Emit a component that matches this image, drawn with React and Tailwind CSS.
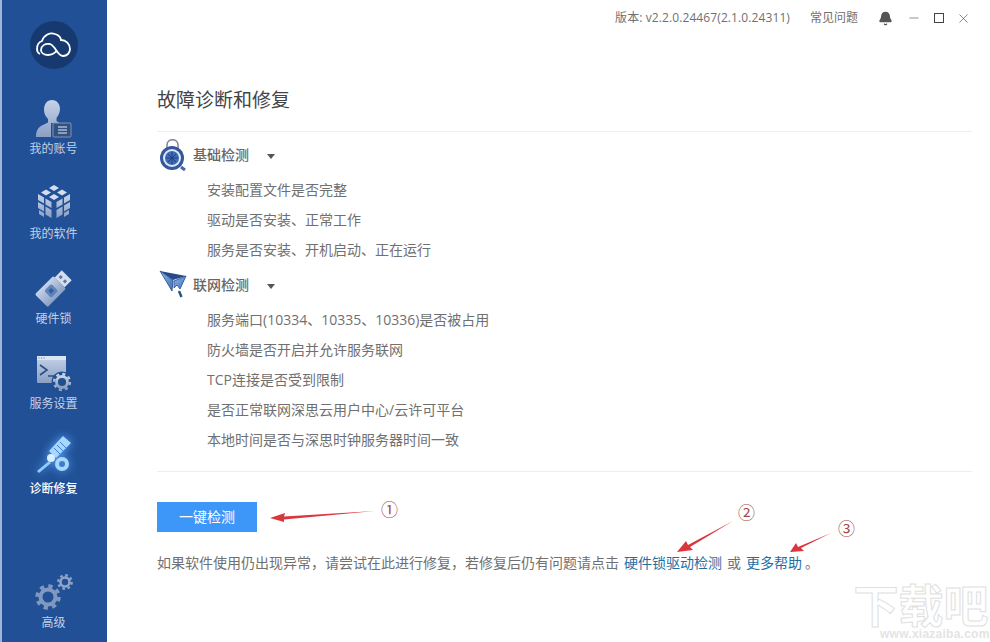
import React from "react";
import { Bell, X, Minus } from "lucide-react";

const cjk = "font-['Open_Sans','Noto_Sans_CJK_SC',sans-serif]";

function Gear({ cx, cy, r, color = "url(#navFill)", sw }) {
  const width = sw || r * 0.42;
  const outer = r + width * 0.85;
  const teeth = 8;
  const c = 2 * Math.PI * outer;
  return (
    <g fill="none">
      <circle cx={cx} cy={cy} r={r} stroke={color} strokeWidth={width} />
      <circle
        cx={cx}
        cy={cy}
        r={outer}
        stroke={color}
        strokeWidth={width * 0.9}
        strokeDasharray={`${c / teeth / 2} ${c / teeth / 2}`}
      />
    </g>
  );
}

function NavDefs() {
  return (
    <svg width="0" height="0" className="absolute">
      <defs>
        <linearGradient id="navFill" x1="0" y1="0" x2="0" y2="1">
          <stop offset="0" stopColor="#c6d3e8" />
          <stop offset="1" stopColor="#8a9fc4" />
        </linearGradient>
        <linearGradient id="planeFill" x1="0" y1="0" x2="1" y2="1">
          <stop offset="0" stopColor="#8db9ea" />
          <stop offset="1" stopColor="#3f70b8" />
        </linearGradient>
      </defs>
    </svg>
  );
}

function UserIcon() {
  return (
    <svg width="40" height="40" viewBox="0 0 40 40">
      <path d="M18 2c5 0 8 4 8 9 0 4-2 7-3.500 9l0 3 3 2H17v14H2c0-6 2-10 7-12l5-2.500 0-3.500c-2-2-4-5-4-9 0-6 3-10 8-10z" fill="url(#navFill)" />
      <rect x="19" y="25" width="18" height="14" rx="1" fill="#33507f" stroke="#7f95bb" strokeWidth="1" />
      <path d="M24 29h9M24 32h9M24 35h9" stroke="#a9bbd6" strokeWidth="1.300" />
    </svg>
  );
}

function CubeIcon() {
  return (
    <svg width="40" height="40" viewBox="0 0 40 40" fill="url(#navFill)">
      <path d="M20 2l5 3-5 3-5-3zM12 6.500l5 3-5 3-5-3zM28 6.500l5 3-5 3-5-3zM20 11l5 3-5 3-5-3z" fill="#d3deee" />
      <path d="M4 11l6 3.500v6L4 17zM11.500 15.500l6 3.500v6l-6-3.500zM4 19l6 3.500v6L4 25zM11.500 23.500l6 3.500v8l-6-3.500zM5 27l5 3v4l-5-3z" />
      <path d="M36 11l-6 3.500v6l6-3.500zM28.500 15.500l-6 3.500v6l6-3.500zM36 19l-6 3.500v6l6-3.500zM28.500 23.500l-6 3.500v8l6-3.500zM35 27l-5 3v4l5-3z" />
    </svg>
  );
}

function UsbIcon() {
  return (
    <svg width="40" height="40" viewBox="0 0 40 40">
      <g transform="rotate(-45 20 20)">
        <rect x="2" y="11" width="26" height="18" rx="1.500" fill="url(#navFill)" />
        <rect x="28" y="13" width="10" height="14" fill="#d5deed" />
        <rect x="31" y="15.500" width="3" height="3" fill="#5a78a8" />
        <rect x="31" y="21.500" width="3" height="3" fill="#5a78a8" />
        <rect x="11" y="15" width="10" height="10" rx="2" fill="#5f83ba" />
        <rect x="14" y="18" width="4" height="4" fill="#2f5fa6" />
      </g>
    </svg>
  );
}

function TerminalIcon() {
  return (
    <svg width="40" height="40" viewBox="0 0 40 40">
      <rect x="3" y="3" width="29" height="27" rx="1" fill="url(#navFill)" />
      <rect x="3" y="3" width="29" height="4" fill="#dbe4f2" />
      <path d="M4.500 5h1M7 5h1M9.500 5h1" stroke="#5b76a5" strokeWidth="1.200" />
      <path d="M6 12l7 5-7 5M14 23h6" stroke="#2d4d85" strokeWidth="1.600" fill="none" />
      <circle cx="28" cy="29" r="10.500" fill="#21508f" />
      <Gear cx={28} cy={29} r={5.500} sw={2.800} />
    </svg>
  );
}

function RepairIcon() {
  return (
    <svg width="44" height="44" viewBox="0 0 44 44" className="drop-shadow-[0_0_5px_#5aa9ff]">
      <path d="M31 0l8 7-15 15-7-7z" fill="#a8d6ff" />
      <path d="M28 6l7 7M25 9l7 7M22 12l7 7" stroke="#3b7fd0" strokeWidth="1" />
      <circle cx="19" cy="22" r="4" fill="#d8efff" />
      <path d="M17 25l2 2-12 10-2-2z" fill="#8fcbff" />
      <circle cx="30" cy="28" r="5" fill="none" stroke="#a6d8ff" strokeWidth="4" />
    </svg>
  );
}

function GearsIcon() {
  return (
    <svg width="40" height="38" viewBox="0 0 40 38">
      <Gear cx={14} cy={24} r={7.500} sw={4} color="#8199c0" />
      <Gear cx={31} cy={9} r={4.500} sw={2.600} color="#8fa5c8" />
    </svg>
  );
}

function NavItem({ icon, label, active }) {
  return (
    <div className="h-[85px] flex flex-col items-center justify-end pb-[3px]">
      <div className="flex items-center justify-center h-[42px]">{icon}</div>
      <span className={`mt-[1px] text-[12px] leading-[18px] ${active ? "text-white font-medium" : "text-[#c3d0e6]"}`}>
        {label}
      </span>
    </div>
  );
}

function Sidebar() {
  return (
    <div className="w-[107px] shrink-0 h-full bg-[#215096] border-l-2 border-[#9fb6d8] flex flex-col pr-[2px]">
      <div className="h-[69px] flex items-end justify-center">
        <div className="w-[48px] h-[48px] rounded-full bg-[#163a70] flex items-center justify-center">
          <svg width="36" height="26" viewBox="0 0 36 26" fill="none" stroke="#fff" strokeWidth="1.800">
            <path d="M4 22C2 21 1 19 1 17C1 13 3 10 6 9C8 3 14 0 19 2C23 3 25 6 25 8C30 8 34 12 34 17C34 21 31 24 27 24C21 24 20 14 14 12C9 11 5 14 5 18C5 21 8 23 12 23C16 23 19 21 21 18" />
          </svg>
        </div>
      </div>
      <div className="h-[7px]" />
      <NavItem icon={<UserIcon />} label="我的账号" />
      <NavItem icon={<CubeIcon />} label="我的软件" />
      <NavItem icon={<UsbIcon />} label="硬件锁" />
      <NavItem icon={<TerminalIcon />} label="服务设置" />
      <NavItem icon={<RepairIcon />} label="诊断修复" active />
      <div className="mt-auto pb-[7px]">
        <NavItem icon={<GearsIcon />} label="高级" />
      </div>
    </div>
  );
}

function LockIcon() {
  return (
    <svg width="28" height="34" viewBox="0 0 28 34">
      <path d="M8 12V7c0-7 11-7 11 0v5" fill="none" stroke="#7b8296" strokeWidth="1.500" />
      <circle cx="13" cy="20" r="12" fill="#34589c" />
      <circle cx="13" cy="20" r="9" fill="#dfe8f4" />
      <circle cx="13" cy="20" r="7" fill="#3f6cb8" />
      <path d="M13 14v12M7 20h12M9 16l8 8M17 16l-8 8" stroke="#213f80" strokeWidth="1" />
      <path d="M22 29l4 3" stroke="#4a66a8" strokeWidth="3" />
    </svg>
  );
}

function PlaneIcon() {
  return (
    <svg width="28" height="30" viewBox="0 0 28 30">
      <path d="M1 1L27 6 14 10z" fill="#27498a" />
      <path d="M1 1L14 10 13 21z" fill="url(#planeFill)" stroke="#27498a" strokeWidth="0.800" />
      <path d="M27 6L15 11 15 18 18 15 21 19z" fill="url(#planeFill)" stroke="#27498a" strokeWidth="0.800" />
      <path d="M20 21l2.500 6" stroke="#2a528f" strokeWidth="2.500" />
    </svg>
  );
}

function CheckGroup({ icon, title, items }) {
  return (
    <div>
      <div className="h-[36px] flex items-center">
        <div className="w-[36px] flex justify-start pl-[2px]">{icon}</div>
        <span className="pb-[2px] text-[14px] font-medium text-[#666]">{title}</span>
        <span className="ml-[18px] mt-[2px] w-0 h-0 border-x-[4px] border-x-transparent border-t-[5px] border-t-[#555]" />
      </div>
      <div className="mt-[2px] pl-[50px]">
        {items.map((item) => (
          <div key={item} className="h-[30px] leading-[30px] text-[14px] text-[#707070]">
            {item}
          </div>
        ))}
      </div>
    </div>
  );
}

function TopBar() {
  return (
    <div className="h-[36px] flex items-center justify-end pr-[19px] text-[12px] text-[#707070]">
      <span className="tracking-[0.1px]">版本: v2.2.0.24467(2.1.0.24311)</span>
      <span className="ml-[20px]">常见问题</span>
      <Bell size={15} className="ml-[20px] text-[#555]" fill="#555" />
      <Minus size={14} strokeWidth={1} className="ml-[14px] text-[#444]" />
      <span className="ml-[13px] w-[10px] h-[10px] border border-[#444]" />
      <X size={15} strokeWidth={1} className="ml-[12px] text-[#444]" />
    </div>
  );
}

// red marker arrows drawn over the screenshot
function Annotations() {
  return (
    <>
      <svg width="990" height="642" className="absolute left-0 top-0 pointer-events-none">
        <g fill="#d9363e">
          <path d="M375 511L284 516.500 285 513 270 518 284 522 284 519.500z" />
          <path d="M733 521L688 545 686 541 677 552 693 550 690 547z" />
          <path d="M831 533L798 547 796 543 790 552 804 551 801 548z" />
        </g>
      </svg>
      <span className="absolute left-[381px] top-[499px] text-[17px] leading-[22px] text-[#a8474c]">①</span>
      <span className="absolute left-[738px] top-[502px] text-[17px] leading-[22px] text-[#a8474c]">②</span>
      <span className="absolute left-[838px] top-[518px] text-[17px] leading-[22px] text-[#a8474c]">③</span>
    </>
  );
}

function Watermark() {
  return (
    <div className="absolute left-[852px] top-[583px] w-[138px] text-center pointer-events-none">
      <div className="text-[45px] leading-[45px] font-bold text-white [-webkit-text-stroke:1px_#e0e0e0] whitespace-nowrap">下载吧</div>
      <div className="ml-[28px] text-left text-[12px] leading-[12px] tracking-[0.25px] font-bold text-[#e4e4e4] font-['Liberation_Sans',sans-serif]">www.xiazaiba.com</div>
    </div>
  );
}

export default function App() {
  return (
    <div className={`relative w-[990px] h-[642px] flex overflow-hidden bg-white ${cjk}`}>
      <NavDefs />
      <Sidebar />
      <div className="flex-1 min-w-0">
        <TopBar />
        <div className="pl-[50px] pr-[18px]">
          <h1 className="mt-[51px] text-[19px] leading-[26px] text-[#444] font-normal">故障诊断和修复</h1>
          <div className="mt-[18px] border-t border-[#eeeeee] pt-[5px]">
            <CheckGroup
              icon={<LockIcon />}
              title="基础检测"
              items={["安装配置文件是否完整", "驱动是否安装、正常工作", "服务是否安装、开机启动、正在运行"]}
            />
            <div className="mt-[2px]">
              <CheckGroup
                icon={<PlaneIcon />}
                title="联网检测"
                items={[
                  "服务端口(10334、10335、10336)是否被占用",
                  "防火墙是否开启并允许服务联网",
                  "TCP连接是否受到限制",
                  "是否正常联网深思云用户中心/云许可平台",
                  "本地时间是否与深思时钟服务器时间一致",
                ]}
              />
            </div>
          </div>
          <div className="mt-[16px] border-t border-[#eeeeee] pt-[30px]">
            <button className="block w-[100px] h-[30px] pb-[2px] bg-[#3c97f8] text-white text-[14px]">一键检测</button>
            <p className="mt-[20px] text-[14px] leading-[22px] text-[#707070] whitespace-nowrap">
              如果软件使用仍出现异常，请尝试在此进行修复，若修复后仍有问题请点击
              <span className="ml-[5px] text-[#1f6fa5]">硬件锁驱动检测</span>
              <span className="mx-[5px]">或</span>
              <span className="text-[#1f6fa5]">更多帮助</span>
              <span className="ml-[3px]">。</span>
            </p>
          </div>
        </div>
      </div>
      <Annotations />
      <Watermark />
    </div>
  );
}
